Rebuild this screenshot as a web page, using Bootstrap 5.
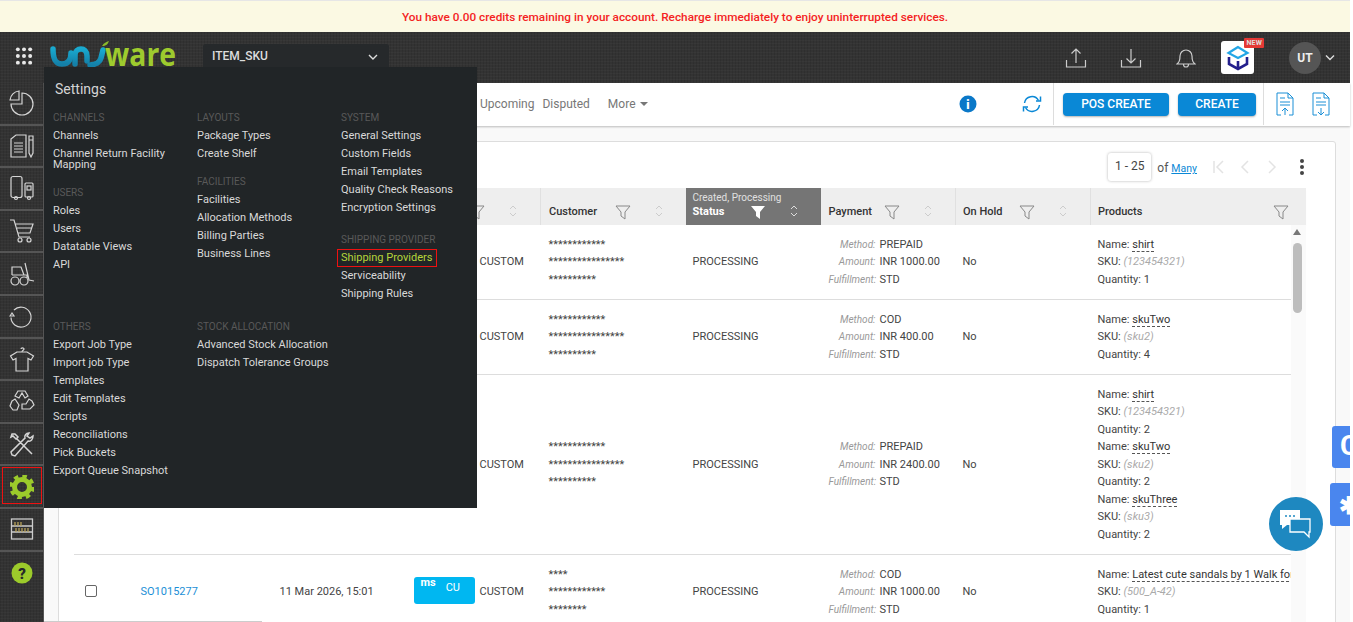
<!DOCTYPE html>
<html lang="en">
<head>
<meta charset="utf-8">
<title>Uniware</title>
<link href="https://cdn.jsdelivr.net/npm/bootstrap@5.3.0/dist/css/bootstrap.min.css" rel="stylesheet">
<style>
html,body{height:622px;overflow:hidden}
body{font-family:Roboto,"Liberation Sans",sans-serif;font-size:12px;color:#444;background:#fff;padding-right:3px}
.tex{background-color:#333;background-image:repeating-linear-gradient(0deg,rgba(255,255,255,.025) 0 1px,transparent 1px 3px),repeating-linear-gradient(90deg,rgba(0,0,0,.09) 0 1px,transparent 1px 3px)}
.topalert{height:32px;background:#fbf9e3;border-top:1px solid #e6e6e6;color:#f4231f;font-size:11.8px;font-weight:500;line-height:32px}
.hdr{height:51px;flex:none;padding-left:15px}
.dots{margin-top:15px}
.skubox{width:186px;height:31px;margin:12px 0 0 25px;background:#26292b;border-radius:3px 3px 0 0;color:#ddd;padding:0 9px 0 9px;font-size:12px;line-height:25px;font-weight:500}
.hicons{gap:0;padding-right:15px}
.hicon{width:55px;display:flex;justify-content:center}
.cubebox{width:33px;height:33px;background:#fff;border-radius:3px;position:relative;margin:0 35px 0 8px;display:flex;align-items:center;justify-content:center}
.newtag{position:absolute;top:-3px;right:-10px;background:#e53935;color:#ddd;font-size:7px;font-weight:700;line-height:10px;padding:0 2px;border-radius:1px;letter-spacing:.2px}
.avatar{width:32px;height:32px;border-radius:50%;background:#555;color:#eee;font-weight:700;font-size:12px;line-height:32px;text-align:center;margin-right:4px}
.side{width:44px;flex:none;border-right:1px solid #555}
.sitem{height:42.6px;display:flex;align-items:center;justify-content:center;border-bottom:2px solid #555;position:relative}
.sel{position:absolute;left:2px;top:1px;right:1px;bottom:3px;border:1px solid #e11;}
.mainarea{background:#f9f9f9;min-width:0;position:relative}
.tbar{height:43px;flex:none;background:#fff;box-shadow:0 1px 2px rgba(0,0,0,.25);padding:0 0 1px 436px;color:#777;font-size:12px;position:relative}
.tbar span.tabx{margin-right:8px}
.caretx{display:inline-block;border:4px solid transparent;border-top-color:#777;border-bottom:0;margin-left:4px;vertical-align:2px}
.vdiv{width:1px;align-self:stretch;background:#ddd}
.bluebtn{background:#0a88d6;color:#fff;font-size:12px;font-weight:500;border:0;border-radius:4px;height:23px;line-height:22px;padding:0;box-shadow:0 1px 2px rgba(0,0,0,.3)}
.bluebtn:hover{background:#0a88d6;color:#fff}
.sheet{margin:15px 14px 0 14px;border:1px solid #ddd;border-radius:3px 3px 0 0;background:#fff;height:490px;overflow:hidden;padding:0 0 0 14px;flex:none}
.pager{height:46px;padding-right:30px;color:#555;padding-top:11px}
.pgicon{margin-top:6px}
.rangebox{width:43px;height:28px;background:#fff;border-radius:3px;box-shadow:0 0 3px rgba(0,0,0,.3);text-align:center;line-height:27px;color:#444;font-size:12px}
.manylnk{color:#0a88d6;font-size:10.5px}
.otable{table-layout:fixed;width:1232px;margin:0;color:#444;font-size:11px;--bs-table-bg:transparent}
.otable th{height:37px;background:#eee;font-weight:500;color:#333;vertical-align:bottom;padding:0 23px 5px 7px;border:0;border-left:1px solid #e0e0e0;box-shadow:0 2px 2px -1px rgba(0,0,0,.1);line-height:16px;font-size:11px}
.otable th.endhd{padding-right:17px}
.otable th.custh{padding-left:8px}
.otable th.stat{background:#757575;color:#fff;padding-left:7px;font-weight:700;border-left:0}
.subf{display:block;color:#e0e0e0;font-size:10px;font-weight:400;line-height:13px;margin-top:2px}
.otable td{padding:10.75px 7px;border-bottom:1px solid #ddd;vertical-align:middle;line-height:17.5px;background:#fff;overflow:hidden;white-space:nowrap}
.otable td.gutter{background:#fafafa;border:0;padding:0}
.otable td.chan{padding-left:75px}
.otable td.stars{font-size:11px;color:#444;padding-left:8px}
.otable td.paycell{padding-left:8px}
.pgrid{display:grid;grid-template-columns:47px auto;column-gap:4px;justify-content:start}
.pgrid i{color:#999;font-size:10px;text-align:right;margin-right:0}
.nm{border-bottom:1px dashed #555;color:#333}
.sku{color:#aaa;font-style:italic}
.solnk{color:#1b8fd6;text-decoration:none}
.chbadge{display:inline-flex;width:61px;height:27px;border-radius:3px;background:#00b7f1;color:#fff;font-size:11px;padding:1px 0 0 7px;gap:10px;vertical-align:middle;margin:0 5px 3px 0;line-height:19px}
.chbadge b{font-size:11px;font-weight:700;line-height:10px}
.cbx{width:12px;height:12px;border:1px solid #666;border-radius:2px;display:block;margin:0 0 3px 0}
.flyout{position:absolute;left:44px;top:67px;width:433px;height:441px;background:#212527;color:#d9d9d9;z-index:5;padding:12px 0 0 9px;font-size:11px}
.flyttl{font-size:14px;margin:0 0 0 2px;line-height:20px;color:#d4d4d4;font-weight:400}
.flygrid{display:grid;grid-template-columns:144px 144px 136px;grid-template-rows:209px auto;margin-top:10px}
.flyhd{color:#595959;font-size:10px;line-height:18px;text-transform:uppercase}
.flylnk{display:block;color:#d9d9d9;line-height:18px;text-decoration:none}
.flytwo{line-height:11px;padding:3px 0 4px}
.gapup{margin-top:10px}
.gapup2{margin-top:14px}
.hot{color:#b6d43a;outline:1px solid #e11;outline-offset:-1px;margin-left:-4px;padding-left:4px;width:100px}
.vscroll{position:absolute;left:1293px;top:226px;width:9px;height:100px;z-index:2}
.vthumb{position:absolute;left:0;top:17px;width:9px;height:70px;background:#bdbdbd;border-radius:5px}
.varrow{position:absolute;left:0;top:3px;border:4.5px solid transparent;border-top:0;border-bottom:6px solid #777}
.hthumb{position:absolute;left:44px;top:621px;width:218px;height:1px;background:#ccc;z-index:2}
.chatbtn{position:absolute;left:1269px;top:497px;width:54px;height:54px;border-radius:50%;background:#1e88c0;z-index:6;display:flex;align-items:center;justify-content:center}
.sidetab{position:absolute;background:#4a86ee;border-radius:3px 0 0 3px;color:#fff;font-weight:700;overflow:hidden;z-index:6;white-space:nowrap;text-align:left}
.tab1{left:1332px;top:426px;width:18px;height:42px;font-size:28px;line-height:40px;padding-left:8px}
.tab2{left:1330px;top:483px;width:20px;height:43px;font-size:24px;line-height:46px;padding-left:9px}
.logosvg{overflow:visible;margin:8px 0 0 17px}
.logoword{font-family:"Open Sans",sans-serif;font-weight:700}
</style>
</head>
<body>
<div class="d-flex flex-column" style="height:622px">
<div class="topalert text-center flex-none">You have 0.00 credits remaining in your account. Recharge immediately to enjoy uninterrupted services.</div>

<header class="hdr tex d-flex align-items-start">
  <svg class="dots" width="18" height="18" viewBox="0 0 19 19" fill="#e8e8e8" aria-hidden="true"><circle cx="3" cy="2.5" r="2.1"/><circle cx="9.5" cy="2.5" r="2.1"/><circle cx="16" cy="2.5" r="2.1"/><circle cx="3" cy="9.5" r="2.1"/><circle cx="9.5" cy="9.5" r="2.1"/><circle cx="16" cy="9.5" r="2.1"/><circle cx="3" cy="16.5" r="2.1"/><circle cx="9.5" cy="16.5" r="2.1"/><circle cx="16" cy="16.5" r="2.1"/></svg>
  <svg class="logosvg" width="128" height="28" viewBox="0 0 128 28" aria-hidden="true">
    <defs><linearGradient id="lgblue" x1="0" y1="0" x2="0" y2="1"><stop offset="0" stop-color="#19a9cf"/><stop offset="1" stop-color="#1480a8"/></linearGradient></defs>
    <g fill="none" stroke="url(#lgblue)" stroke-width="5.5" stroke-linecap="round">
      <path d="M3 9c0 11 3 15 9 15s9-4 9-11"/>
      <path d="M25 24V15c0-4 3-6 6-6s6 2 6 7v5"/>
      <path d="M40 25c6 0 10-3 11-7l2-8"/>
    </g>
    <path d="M52 6c2-3 4-4 7-5-1 3-3 5-7 5z" fill="#8bbb2b"/>
    <text class="logoword" x="55" y="26" font-size="33" fill="#9ecb2e" textLength="71" lengthAdjust="spacingAndGlyphs">ware</text>
  </svg>
  <div class="skubox d-flex justify-content-between">ITEM_SKU<svg style="margin-right:2px" width="10" height="25" viewBox="0 0 10 25" aria-hidden="true"><path d="M1 11l4 4 4-4" fill="none" stroke="#ddd" stroke-width="1.4"/></svg></div>
  <div class="hicons ms-auto d-flex align-items-center align-self-stretch">
    <div class="hicon"><svg width="22" height="22" viewBox="0 0 22 22" fill="none" stroke="#ccc" stroke-width="1.2" aria-hidden="true"><path d="M1.5 13v7h19v-7M11 16V2M6.5 6.5L11 2l4.5 4.5"/></svg></div>
    <div class="hicon"><svg width="22" height="22" viewBox="0 0 22 22" fill="none" stroke="#ccc" stroke-width="1.2" aria-hidden="true"><path d="M1.5 13v7h19v-7M11 2v14M6.5 11.5L11 16l4.5-4.5"/></svg></div>
    <div class="hicon"><svg width="20" height="22" viewBox="0 0 20 22" fill="none" stroke="#ccc" stroke-width="1.2" aria-hidden="true"><path d="M1 17c2-2 3-3 3-8a6 6 0 0 1 12 0c0 5 1 6 3 8zM7.5 17.5a2.5 2.5 0 0 0 5 0"/></svg></div>
    <div class="cubebox"><svg width="24" height="26" viewBox="0 0 24 26" fill="none" aria-hidden="true"><path d="M12 2L2.5 8 12 13l9.5-5z" stroke="#23a6e6" stroke-width="2.2"/><path d="M3 12v7l9 5 9-5v-7M12 16v8" stroke="#231f8c" stroke-width="2.6"/></svg><span class="newtag">NEW</span></div>
    <div class="avatar">UT</div>
    <svg width="10" height="8" viewBox="0 0 10 8" aria-hidden="true"><path d="M1 1.500l4 4 4-4" fill="none" stroke="#ddd" stroke-width="1.4"/></svg>
  </div>
</header>

<div class="d-flex flex-grow-1" style="min-height:0">
  <nav class="side tex">
    <div class="sitem"><svg width="26" height="26" viewBox="0 0 26 26" fill="none" stroke="#d5d5d5" stroke-width="1.2" aria-hidden="true"><path d="M13 3a11 11 0 1 1-11 11h11z"/><path d="M10 1h0a10 10 0 0 0-9 9h9z" /></svg></div>
    <div class="sitem"><svg width="26" height="26" viewBox="0 0 26 26" fill="none" stroke="#d5d5d5" stroke-width="1.2" aria-hidden="true"><path d="M2 6l5-4h10v22H2zM5 10h9M5 13h9M5 16h9M5 19h9"/><path d="M20 3h4v17l-2 4-2-4zM20 7h4"/></svg></div>
    <div class="sitem"><svg width="26" height="26" viewBox="0 0 26 26" fill="none" stroke="#d5d5d5" stroke-width="1.2" aria-hidden="true"><rect x="2" y="1.500" width="11" height="21" rx="2"/><rect x="16" y="8" width="8" height="14" rx="1"/><rect x="18" y="11" width="4" height="4"/><circle cx="7" cy="23" r="1.500"/><circle cx="20" cy="23" r="1.500"/></svg></div>
    <div class="sitem"><svg width="26" height="26" viewBox="0 0 26 26" fill="none" stroke="#d5d5d5" stroke-width="1.2" aria-hidden="true"><path d="M1 2h4l5 17h11M6 6h18l-3 9H9M8 10h15"/><circle cx="11" cy="22" r="2"/><circle cx="20" cy="22" r="2"/></svg></div>
    <div class="sitem"><svg width="26" height="26" viewBox="0 0 26 26" fill="none" stroke="#d5d5d5" stroke-width="1.2" aria-hidden="true"><path d="M3 14V6h9l3 8M3 14h15v3M16 2l4 17 5 1"/><circle cx="6" cy="20" r="4"/><circle cx="15" cy="20" r="4"/></svg></div>
    <div class="sitem"><svg width="26" height="26" viewBox="0 0 26 26" fill="none" stroke="#d5d5d5" stroke-width="1.2" aria-hidden="true"><path d="M5 7a10 10 0 1 1-3 7.500"/><path d="M1 13l2-3 2 3z"/></svg></div>
    <div class="sitem"><svg width="26" height="26" viewBox="0 0 26 26" fill="none" stroke="#d5d5d5" stroke-width="1.2" aria-hidden="true"><path d="M8 6L1.500 10l2.500 4 3-1.500V25h12V12.500l3 1.500 2.500-4L18 6z"/><path d="M13 6c0-2 2-1.500 2-3s-3-1.500-3 0"/></svg></div>
    <div class="sitem"><svg width="26" height="26" viewBox="0 0 26 26" fill="none" stroke="#d5d5d5" stroke-width="1.2" aria-hidden="true"><path d="M9 3h7l3 5-3 2-3-5-3 5-4-2zM3 13l3-2 4 6-2 5H4l-3-4zM23 13l-3-2-3 5h-4v5h8l4-4z"/></svg></div>
    <div class="sitem"><svg width="26" height="26" viewBox="0 0 26 26" fill="none" stroke="#d5d5d5" stroke-width="1.5" aria-hidden="true"><path d="M6 3l3 3-2 2-3-3-2 1 1-3zM8 8l15 15M20 2c-3 0-5 3-4 5L2 21l1 3 3 1L19 10c3 1 5-2 5-5l-3 2-3-2z"/></svg></div>
    <div class="sitem"><span class="sel"></span><svg width="24" height="24" viewBox="0 0 24 24" aria-hidden="true"><circle cx="12" cy="12" r="7.500" fill="none" stroke="#9ccb2b" stroke-width="5"/><circle cx="12" cy="12" r="11" fill="none" stroke="#9ccb2b" stroke-width="3.500" stroke-dasharray="4.500 4.140"/></svg></div>
    <div class="sitem"><svg width="24" height="24" viewBox="0 0 24 24" fill="none" stroke="#ccc" stroke-width="1.3" aria-hidden="true"><rect x="1.500" y="2" width="21" height="20"/><path d="M1.500 9h21M1.500 15h21"/><path d="M5 5v4M8 5v4M11 5v4M6 11v4M9 11v4M12 11v4M15 11v4M18 11v4" stroke="#b7a25a"/></svg></div>
    <div class="sitem" style="border:0"><svg width="22" height="22" viewBox="0 0 22 22" aria-hidden="true"><circle cx="11" cy="11" r="10.500" fill="#9ccb2b"/><text x="11" y="16.500" text-anchor="middle" font-size="15" font-weight="900" fill="#26292b" font-family="Roboto,sans-serif">?</text></svg></div>
  </nav>

  <main class="mainarea flex-grow-1 d-flex flex-column">
    <div class="tbar d-flex align-items-center">
      <span class="tabx">Upcoming</span><span class="tabx" style="margin-right:18px">Disputed</span><span>More<span class="caretx"></span></span>
      <svg class="ms-auto" width="18" height="18" viewBox="0 0 18 18" aria-hidden="true"><circle cx="9" cy="9" r="8.500" fill="#0a78c8"/><text x="9" y="13.500" text-anchor="middle" font-size="12" font-weight="900" fill="#fff" font-family="Roboto,sans-serif">i</text></svg>
      <svg style="margin:0 10px 0 44px" width="22" height="20" viewBox="0 0 22 20" fill="none" stroke="#0a88d6" stroke-width="1.500" aria-hidden="true"><path d="M3.500 9a7.500 7.500 0 0 1 14-2.500M18.500 11a7.500 7.500 0 0 1-14 2.500"/><path d="M15 7h4.500V2.500M7 13H2.500v4.500"/></svg>
      <div class="vdiv"></div>
      <button class="btn bluebtn" style="width:106px;margin-left:9px">POS CREATE</button>
      <button class="btn bluebtn" style="width:78px;margin-left:9px">CREATE</button>
      <div class="vdiv" style="margin-left:7px"></div>
      <svg style="margin-left:12px" width="18" height="24" viewBox="0 0 18 24" fill="none" stroke="#1b8fd6" stroke-width="1" aria-hidden="true"><path d="M1 20V1h11l5 5v14M12 1v5h5M4 6h5M4 10h10M4 13h10M9 23v-7M6 19l3-3 3 3M1 20v3h4M17 20v3h-4"/></svg>
      <svg style="margin:0 20px 0 18px" width="18" height="24" viewBox="0 0 18 24" fill="none" stroke="#1b8fd6" stroke-width="1" aria-hidden="true"><path d="M1 20V1h11l5 5v14M12 1v5h5M4 6h5M4 10h10M4 13h10M9 16v7M6 20l3 3 3-3M1 20v3h4M17 20v3h-4"/></svg>
    </div>

    <section class="sheet">
      <div class="pager d-flex justify-content-end align-items-start">
        <div class="rangebox">1 - 25</div>
        <div style="margin:6px 0 0 6px">of <a class="manylnk" href="#">Many</a></div>
        <svg class="pgicon" style="margin-left:15px" width="14" height="16" viewBox="0 0 14 16" fill="none" stroke="#e3e3e3" stroke-width="1.500" aria-hidden="true"><path d="M2 2v12M11 2L5 8l6 6"/></svg>
        <svg class="pgicon" style="margin-left:14px" width="10" height="16" viewBox="0 0 10 16" fill="none" stroke="#e3e3e3" stroke-width="1.500" aria-hidden="true"><path d="M8 2L2 8l6 6"/></svg>
        <svg class="pgicon" style="margin-left:17px" width="10" height="16" viewBox="0 0 10 16" fill="none" stroke="#e3e3e3" stroke-width="1.500" aria-hidden="true"><path d="M2 2l6 6-6 6"/></svg>
        <svg class="pgicon" style="margin-left:22px" width="6" height="16" viewBox="0 0 6 16" fill="#444" aria-hidden="true"><circle cx="3" cy="2" r="2"/><circle cx="3" cy="8" r="2"/><circle cx="3" cy="14" r="2"/></svg>
      </div>
      <table class="table otable">
        <colgroup><col style="width:56px"><col style="width:140px"><col style="width:135px"><col style="width:136px"><col style="width:145px"><col style="width:135px"><col style="width:135px"><col style="width:135px"><col style="width:200px"><col style="width:15px"></colgroup>
        <thead><tr>
          <th></th><th></th><th></th>
          <th><div class="d-flex justify-content-end"><svg width="16" height="16" viewBox="0 0 16 16" fill="none" stroke="#888" aria-hidden="true"><path d="M1 2h14L10 8v7l-4-3V8z"/></svg><svg style="margin-left:24px" width="8" height="14" viewBox="0 0 8 14" fill="none" stroke="#ccc" aria-hidden="true"><path d="M1 5l3-3 3 3M1 9l3 3 3-3"/></svg></div></th>
          <th class="custh"><div class="d-flex"><span class="me-auto">Customer</span><svg width="16" height="16" viewBox="0 0 16 16" fill="none" stroke="#888" aria-hidden="true"><path d="M1 2h14L10 8v7l-4-3V8z"/></svg><svg style="margin-left:24px" width="8" height="14" viewBox="0 0 8 14" fill="none" stroke="#ccc" aria-hidden="true"><path d="M1 5l3-3 3 3M1 9l3 3 3-3"/></svg></div></th>
          <th class="stat"><span class="subf">Created, Processing</span><div class="d-flex"><span class="me-auto">Status</span><svg width="16" height="16" viewBox="0 0 16 16" fill="#fff" aria-hidden="true"><path d="M1 2h14L10 8v7l-4-3V8z"/></svg><svg style="margin-left:24px" width="8" height="14" viewBox="0 0 8 14" fill="none" stroke="#ddd" aria-hidden="true"><path d="M1 5l3-3 3 3M1 9l3 3 3-3"/></svg></div></th>
          <th style="border-left:0;padding-left:8px"><div class="d-flex"><span class="me-auto">Payment</span><svg width="16" height="16" viewBox="0 0 16 16" fill="none" stroke="#888" aria-hidden="true"><path d="M1 2h14L10 8v7l-4-3V8z"/></svg><svg style="margin-left:24px" width="8" height="14" viewBox="0 0 8 14" fill="none" stroke="#ccc" aria-hidden="true"><path d="M1 5l3-3 3 3M1 9l3 3 3-3"/></svg></div></th>
          <th><div class="d-flex"><span class="me-auto">On Hold</span><svg width="16" height="16" viewBox="0 0 16 16" fill="none" stroke="#888" aria-hidden="true"><path d="M1 2h14L10 8v7l-4-3V8z"/></svg><svg style="margin-left:24px" width="8" height="14" viewBox="0 0 8 14" fill="none" stroke="#ccc" aria-hidden="true"><path d="M1 5l3-3 3 3M1 9l3 3 3-3"/></svg></div></th>
          <th class="endhd" colspan="2"><div class="d-flex"><span class="me-auto">Products</span><svg width="16" height="16" viewBox="0 0 16 16" fill="none" stroke="#888" aria-hidden="true"><path d="M1 2h14L10 8v7l-4-3V8z"/></svg></div></th>
        </tr></thead>
        <tbody>
          <tr><td></td><td></td><td></td><td class="chan">CUSTOM</td>
            <td class="stars">************<br>****************<br>**********</td><td>PROCESSING</td>
            <td class="paycell"><div class="pgrid"><i>Method:</i><span>PREPAID</span><i>Amount:</i><span>INR 1000.00</span><i>Fulfillment:</i><span>STD</span></div></td><td>No</td>
            <td>Name: <span class="nm">shirt</span><br>SKU: <span class="sku">(123454321)</span><br>Quantity: 1</td><td class="gutter"></td></tr>
          <tr><td></td><td></td><td></td><td class="chan">CUSTOM</td>
            <td class="stars">************<br>****************<br>**********</td><td>PROCESSING</td>
            <td class="paycell"><div class="pgrid"><i>Method:</i><span>COD</span><i>Amount:</i><span>INR 400.00</span><i>Fulfillment:</i><span>STD</span></div></td><td>No</td>
            <td>Name: <span class="nm">skuTwo</span><br>SKU: <span class="sku">(sku2)</span><br>Quantity: 4</td><td class="gutter"></td></tr>
          <tr><td></td><td></td><td></td><td class="chan">CUSTOM</td>
            <td class="stars">************<br>****************<br>**********</td><td>PROCESSING</td>
            <td class="paycell"><div class="pgrid"><i>Method:</i><span>PREPAID</span><i>Amount:</i><span>INR 2400.00</span><i>Fulfillment:</i><span>STD</span></div></td><td>No</td>
            <td>Name: <span class="nm">shirt</span><br>SKU: <span class="sku">(123454321)</span><br>Quantity: 2<br>Name: <span class="nm">skuTwo</span><br>SKU: <span class="sku">(sku2)</span><br>Quantity: 2<br>Name: <span class="nm">skuThree</span><br>SKU: <span class="sku">(sku3)</span><br>Quantity: 2</td><td class="gutter"></td></tr>
          <tr><td><span class="cbx ms-1"></span></td><td style="padding-left:11px"><a class="solnk" href="#">SO1015277</a></td><td style="padding-left:10px">11 Mar 2026, 15:01</td>
            <td style="padding:0 0 0 9px"><span class="chbadge"><b>ms</b>CU</span>CUSTOM</td>
            <td class="stars">****<br>************<br>********</td><td>PROCESSING</td>
            <td class="paycell"><div class="pgrid"><i>Method:</i><span>COD</span><i>Amount:</i><span>INR 1000.00</span><i>Fulfillment:</i><span>STD</span></div></td><td>No</td>
            <td style="padding-right:0">Name: <span class="nm">Latest cute sandals by 1 Walk for</span><br>SKU: <span class="sku">(500_A-42)</span><br>Quantity: 1</td><td class="gutter"></td></tr>
        </tbody>
      </table>
    </section>
  </main>
</div>
</div>

<aside class="flyout">
  <h2 class="flyttl">Settings</h2>
  <div class="flygrid">
    <div>
      <div class="flyhd">Channels</div>
      <a class="flylnk" href="#">Channels</a>
      <a class="flylnk flytwo" href="#">Channel Return Facility Mapping</a>
      <div class="flyhd gapup">Users</div>
      <a class="flylnk" href="#">Roles</a><a class="flylnk" href="#">Users</a><a class="flylnk" href="#">Datatable Views</a><a class="flylnk" href="#">API</a>
    </div>
    <div>
      <div class="flyhd">Layouts</div>
      <a class="flylnk" href="#">Package Types</a><a class="flylnk" href="#">Create Shelf</a>
      <div class="flyhd gapup">Facilities</div>
      <a class="flylnk" href="#">Facilities</a><a class="flylnk" href="#">Allocation Methods</a><a class="flylnk" href="#">Billing Parties</a><a class="flylnk" href="#">Business Lines</a>
    </div>
    <div>
      <div class="flyhd">System</div>
      <a class="flylnk" href="#">General Settings</a><a class="flylnk" href="#">Custom Fields</a><a class="flylnk" href="#">Email Templates</a><a class="flylnk" href="#">Quality Check Reasons</a><a class="flylnk" href="#">Encryption Settings</a>
      <div class="flyhd gapup2">Shipping Provider</div>
      <a class="flylnk hot" href="#">Shipping Providers</a><a class="flylnk" href="#">Serviceability</a><a class="flylnk" href="#">Shipping Rules</a>
    </div>
    <div>
      <div class="flyhd">Others</div>
      <a class="flylnk" href="#">Export Job Type</a><a class="flylnk" href="#">Import job Type</a><a class="flylnk" href="#">Templates</a><a class="flylnk" href="#">Edit Templates</a><a class="flylnk" href="#">Scripts</a><a class="flylnk" href="#">Reconciliations</a><a class="flylnk" href="#">Pick Buckets</a><a class="flylnk" href="#">Export Queue Snapshot</a>
    </div>
    <div>
      <div class="flyhd">Stock Allocation</div>
      <a class="flylnk" href="#">Advanced Stock Allocation</a><a class="flylnk" href="#">Dispatch Tolerance Groups</a>
    </div>
  </div>
</aside>

<div class="vscroll"><span class="varrow"></span><span class="vthumb"></span></div>
<div class="hthumb"></div>
<div class="sidetab tab1">C</div>
<div class="sidetab tab2">✱</div>
<div class="chatbtn"><svg width="34" height="30" viewBox="0 0 34 30" aria-hidden="true"><path d="M1 1h20v15H8l-5 4v-4H1z" fill="#fff"/><path d="M11 10h20v13h-1v5l-5-5H11z" fill="#1e88c0" stroke="#fff" stroke-width="1.300"/><g fill="#1e88c0"><circle cx="7" cy="7" r="1"/><circle cx="11" cy="7" r="1"/><circle cx="15" cy="7" r="1"/></g></svg></div>

<script src="https://cdn.jsdelivr.net/npm/bootstrap@5.3.0/dist/js/bootstrap.bundle.min.js"></script>
</body>
</html>
